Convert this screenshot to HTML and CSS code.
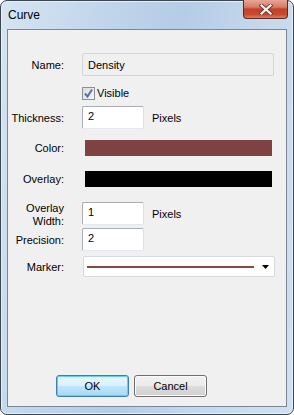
FILE: index.html
```html
<!DOCTYPE html>
<html lang="en">
<head>
    <meta charset="UTF-8">
    <title>Curve</title>
    <link rel="stylesheet" href="styles.css">
</head>
<body>
    <div class="window">
        <div class="titlebar">
            <span class="title">Curve</span>
            <div class="close-btn">
                <svg width="16" height="11" viewBox="0 0 16 11">
                    <path d="M3.5 1.5 L12.5 9.5 M12.5 1.5 L3.5 9.5" stroke="#6b3a33" stroke-width="4" stroke-linecap="square"/>
                    <path d="M3.5 1.5 L12.5 9.5 M12.5 1.5 L3.5 9.5" stroke="#f4f4f4" stroke-width="2.2" stroke-linecap="square"/>
                </svg>
            </div>
        </div>

        <div class="client">
            <div class="row row-name">
                <label class="lbl">Name:</label>
                <div class="field disabled">Density</div>
            </div>

            <div class="row row-check">
                <span></span>
                <div class="check">
                    <span class="box">
                        <svg width="11" height="11" viewBox="0 0 11 11">
                            <path d="M2 5.5 L4.5 8.5 L9 1.5" fill="none" stroke="#5a70ad" stroke-width="2"/>
                        </svg>
                    </span>
                    <span>Visible</span>
                </div>
            </div>

            <div class="row row-thick">
                <label class="lbl">Thickness:</label>
                <div class="inline">
                    <div class="field small">2</div>
                    <span class="unit">Pixels</span>
                </div>
            </div>

            <div class="row row-color">
                <label class="lbl">Color:</label>
                <div class="swatch brown"></div>
            </div>

            <div class="row row-overlay">
                <label class="lbl">Overlay:</label>
                <div class="swatch black"></div>
            </div>

            <div class="row row-ow">
                <label class="lbl two-line">Overlay<br>Width:</label>
                <div class="inline">
                    <div class="field small">1</div>
                    <span class="unit">Pixels</span>
                </div>
            </div>

            <div class="row row-prec">
                <label class="lbl">Precision:</label>
                <div class="inline">
                    <div class="field small">2</div>
                </div>
            </div>

            <div class="row row-marker">
                <label class="lbl">Marker:</label>
                <div class="combo">
                    <span class="combo-line"></span>
                    <svg width="8" height="4" viewBox="0 0 8 4"><path d="M0 0 H7 L3.5 4 Z" fill="#000"/></svg>
                </div>
            </div>

            <div class="buttons">
                <button class="btn default">OK</button>
                <button class="btn">Cancel</button>
            </div>
        </div>
    </div>
</body>
</html>
```

FILE: styles.css
```css
html, body {
    margin: 0;
    padding: 0;
}

body {
    width: 294px;
    height: 415px;
    overflow: hidden;
    font-family: "Liberation Sans", Arial, sans-serif;
    font-size: 11px;
    color: #000;
}

.window {
    box-sizing: border-box;
    width: 294px;
    height: 415px;
    border: 1px solid #3c4650;
    border-radius: 7px;
    background: linear-gradient(100deg, #d6e4f2 0%, #c0d5ea 30%, #b4cce6 50%, #c6d9ed 75%, #d0e0f0 100%);
    padding: 0 6px 7px 6px;
    display: flex;
    flex-direction: column;
    box-shadow: inset 0 0 0 1px #e6eef7;
}

.titlebar {
    height: 28px;
    position: relative;
}

.title {
    position: absolute;
    left: 1px;
    top: 7px;
    font-size: 12px;
}

.close-btn {
    position: absolute;
    right: -1px;
    top: -1px;
    width: 45px;
    height: 19px;
    box-sizing: border-box;
    border: 1px solid #5a2a24;
    border-top: none;
    border-radius: 0 0 4px 4px;
    background: linear-gradient(#e8a597 0%, #d77b66 40%, #c2412a 50%, #c84a2e 80%, #e07c5c 100%);
    display: flex;
    align-items: center;
    justify-content: center;
}

.client {
    flex: 1;
    background: #f0f0f0;
    border: 1px solid #7a8794;
    padding: 23px 11px 9px 0;
    display: flex;
    flex-direction: column;
}

.row {
    display: grid;
    grid-template-columns: 56px 1fr;
    column-gap: 18px;
    align-items: center;
}

.row-name { height: 23px; }
.row-check { height: 14px; margin-top: 10px; }
.row-thick { height: 23px; margin-top: 6px; }
.row-color { height: 16px; margin-top: 11px; }
.row-overlay { height: 16px; margin-top: 15px; }
.row-ow { height: 23px; margin-top: 12px; }
.row-prec { height: 23px; margin-top: 6px; }
.row-marker { height: 21px; margin-top: 5px; }

.lbl {
    text-align: right;
    white-space: nowrap;
}

.two-line {
    line-height: 13px;
    margin-top: 3px;
}

.field {
    box-sizing: border-box;
    height: 23px;
    padding: 3px 0 0 5px;
    background: #fff;
    border: 1px solid #abadb3;
    border-right-color: #dbdfe6;
    border-bottom-color: #e3e9ef;
    border-radius: 2px;
    margin-right: 1px;
}

.field.disabled {
    background: #f0f0f0;
    border-color: #d5d5d5;
    padding-top: 5px;
}

.field.small {
    width: 62px;
}

.inline {
    display: flex;
    align-items: center;
}

.unit {
    margin-left: 7px;
}

.check {
    display: flex;
    align-items: center;
    gap: 2px;
}

.box {
    box-sizing: border-box;
    width: 13px;
    height: 13px;
    border: 1px solid #8e8f8f;
    background: linear-gradient(135deg, #dcdcdc, #f6f6f6);
    display: flex;
    align-items: center;
    justify-content: center;
}

.swatch {
    height: 16px;
    margin: 0 3px;
}

.swatch.brown { background: #7f4242; }
.swatch.black { background: #000; }

.combo {
    box-sizing: border-box;
    height: 21px;
    margin-left: 1px;
    background: #fff;
    border: 1px solid #d6d9de;
    border-radius: 2px;
    display: flex;
    align-items: center;
    padding: 0 4px 0 3px;
}

.combo-line {
    flex: 1;
    height: 2px;
    background: #8b4646;
    margin-right: 8px;
}

.buttons {
    margin-top: auto;
    display: flex;
    gap: 5px;
    padding-left: 48px;
}

.btn {
    box-sizing: border-box;
    width: 73px;
    height: 22px;
    font-family: inherit;
    font-size: 11px;
    color: #000;
    border: 1px solid #707070;
    border-radius: 3px;
    background: linear-gradient(#f2f2f2 0%, #ebebeb 50%, #dddddd 51%, #cfcfcf 100%);
    box-shadow: inset 0 0 0 1px #fbfbfb;
    padding: 0;
}

.btn.default {
    border-color: #3c7fb1;
    background: linear-gradient(#e9f6fd 0%, #d9f0fc 50%, #bee6fd 51%, #a7d9f5 100%);
    box-shadow: inset 0 0 0 1px #5fd0f6;
}
```
